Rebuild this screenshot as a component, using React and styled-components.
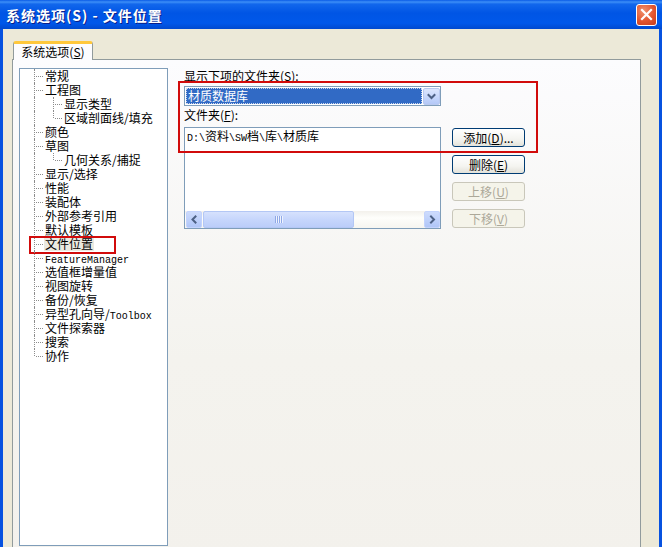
import React from 'react';
import styled, { createGlobalStyle } from 'styled-components';

const GlobalStyle = createGlobalStyle`
  html, body { margin: 0; padding: 0; background: #fff; }
  body {
    font-family: "Noto Sans CJK SC", "Liberation Sans", sans-serif;
    font-size: 12px;
    color: #000;
  }
  * { box-sizing: border-box; }
`;

const Window = styled.div`
  width: 662px;
  height: 547px;
  overflow: hidden;
  display: flex;
  flex-direction: column;
  background: #ece9d8;
`;

const TitleBar = styled.div`
  flex: 0 0 29px;
  display: flex;
  align-items: center;
  justify-content: space-between;
  padding: 0 5px 0 6px;
  background: linear-gradient(
    to bottom,
    #0a5be6 0%,
    #3d8ff7 7%,
    #1267ec 14%,
    #0055e5 45%,
    #0058ea 80%,
    #0049cf 100%
  );
`;

const Title = styled.div`
  color: #fff;
  font-weight: bold;
  font-size: 14px;
  line-height: 16px;
  letter-spacing: 1px;
  text-shadow: 1px 1px 0 #0a1f8a;
  white-space: pre;
`;

const CloseButton = styled.div`
  width: 21px;
  height: 22px;
  border: 1px solid #fff;
  border-radius: 3px;
  background: radial-gradient(circle at 35% 30%, #f0926e 0%, #e2552f 55%, #c53c1c 100%);
  display: flex;
  align-items: center;
  justify-content: center;
`;

const Frame = styled.div`
  flex: 1;
  display: flex;
  flex-direction: column;
  border-left: 3px solid #0752e0;
  border-right: 3px solid #0752e0;
  padding: 12px 18px 0 9px;
`;

const TabStrip = styled.div`
  display: flex;
  padding-left: 1px;
  position: relative;
  z-index: 1;
  margin-bottom: -1px;
`;

const Tab = styled.div`
  width: 80px;
  height: 19px;
  border: 1px solid #919b9c;
  border-top: 3px solid #ffc83c;
  border-bottom: none;
  border-radius: 3px 3px 0 0;
  background: #fcfcfe;
  display: flex;
  align-items: center;
  justify-content: center;
  line-height: 14px;
  padding-bottom: 1px;
`;

const Panel = styled.div`
  height: 500px;
  border: 1px solid #919b9c;
  background: linear-gradient(to bottom, #fcfcfe 0%, #f4f3ee 60%, #f3f1ec 100%);
  display: flex;
  align-items: flex-start;
  gap: 16px;
  padding: 8px 6px;
`;

/* ---------- tree ---------- */

const TreeBox = styled.div`
  flex: 0 0 149px;
  height: 478px;
  border: 1px solid #7f9db9;
  background: #fff;
  padding: 0 0 0 6px;
`;

const TreeRow = styled.div`
  position: relative;
  display: flex;
  height: 14px;
  line-height: 14px;
  white-space: nowrap;
`;

const Guide = styled.span`
  position: relative;
  flex: 0 0 19px;
  height: 100%;
  &::before {
    content: '';
    position: absolute;
    left: 8px;
    top: 0;
    height: 100%;
    border-left: 1px dotted #8c8c8c;
  }
`;

const Branch = styled.span`
  position: relative;
  flex: 0 0 19px;
  height: 100%;
  &::before {
    content: '';
    position: absolute;
    left: 8px;
    top: 0;
    height: ${(p) => (p.$last ? '7px' : '100%')};
    border-left: 1px dotted #8c8c8c;
  }
  &::after {
    content: '';
    position: absolute;
    left: 10px;
    top: 7px;
    width: 7px;
    border-top: 1px dotted #8c8c8c;
  }
`;

const NodeLabel = styled.span`
  display: block;
  height: 14px;
  padding: 0 1px;
  margin-left: -1px;
  background: ${(p) => (p.$selected ? '#ebe9e0' : 'transparent')};
`;

const Latin = styled.span`
  font-family: "Liberation Mono", "DejaVu Sans Mono", monospace;
  font-size: 10px;
  letter-spacing: 0;
`;

const Mark = styled.div`
  position: absolute;
  border: 2px solid #d10b0b;
  pointer-events: none;
  left: ${(p) => p.$left}px;
  top: ${(p) => p.$top}px;
  width: ${(p) => p.$width}px;
  height: ${(p) => p.$height}px;
`;

/* ---------- right side ---------- */

const Right = styled.div`
  position: relative;
  flex: 0 0 341px;
  padding-top: 1px;
`;

const FieldLabel = styled.div`
  height: 14px;
  line-height: 14px;
  margin-top: ${(p) => p.$mt || 0}px;
  white-space: nowrap;
`;

const Combo = styled.div`
  margin-top: 3px;
  width: 257px;
  height: 20px;
  border: 1px solid #7f9db9;
  background: #fff;
  display: flex;
  align-items: stretch;
  padding: 1px 0 0 1px;
`;

const ComboValue = styled.div`
  flex: 1;
  height: 16px;
  margin-right: 1px;
  background: #316ac5;
  color: #fff;
  line-height: 15px;
  padding-left: 2px;
  outline: 1px dotted #c9d6ee;
  outline-offset: -1px;
`;

const ComboButton = styled.div`
  flex: 0 0 17px;
  height: 17px;
  border: 1px solid #b9c9ef;
  border-radius: 2px;
  background: linear-gradient(to bottom, #dce6fd 0%, #c4d5fb 60%, #b5c8f7 100%);
  display: flex;
  align-items: center;
  justify-content: center;
`;

const ListRow = styled.div`
  margin-top: 5px;
  display: flex;
  gap: 11px;
  align-items: flex-start;
`;

const ListBox = styled.div`
  width: 257px;
  height: 102px;
  border: 1px solid #7f9db9;
  background: #fff;
  display: flex;
  flex-direction: column;
`;

const ListItems = styled.div`
  flex: 1;
  padding: 1px 2px;
  line-height: 14px;
  white-space: nowrap;
`;

const HScroll = styled.div`
  flex: 0 0 17px;
  display: flex;
  align-items: stretch;
  padding: 0 0 0 1px;
  background: linear-gradient(to bottom, #f3f1ec 0%, #fefefb 40%, #f6f5f0 100%);
`;

const ArrowButton = styled.div`
  flex: 0 0 16px;
  border: 1px solid #c3d3fd;
  border-radius: 2px;
  background: linear-gradient(to bottom, #cddbfc 0%, #bccffa 60%, #b0c6f7 100%);
  display: flex;
  align-items: center;
  justify-content: center;
`;

const Thumb = styled.div`
  flex: 0 0 151px;
  margin-left: 1px;
  border: 1px solid #b3c7f5;
  border-radius: 2px;
  background: linear-gradient(to bottom, #d6e1fd 0%, #c6d6fc 50%, #bbcdf9 100%);
  display: flex;
  align-items: center;
  justify-content: center;
  gap: 1px;
`;

const Grip = styled.span`
  width: 1px;
  height: 7px;
  background: #8fa8e6;
  box-shadow: 1px 0 0 #eef3fe;
`;

const Track = styled.div`
  flex: 1;
`;

const ButtonColumn = styled.div`
  margin-top: 1px;
  display: flex;
  flex-direction: column;
  gap: 8px;
`;

const XpButton = styled.div`
  width: 73px;
  height: 19px;
  border: 1px solid ${(p) => (p.$disabled ? '#c9c7ba' : '#003c74')};
  border-radius: 3px;
  background: ${(p) =>
    p.$disabled
      ? '#f5f4ea'
      : 'linear-gradient(to bottom, #ffffff 0%, #f4f4f0 60%, #e3e2da 100%)'};
  color: ${(p) => (p.$disabled ? '#aca899' : '#000')};
  display: flex;
  align-items: center;
  justify-content: center;
  line-height: 14px;
  white-space: nowrap;
`;

const Chevron = ({ dir }) => {
  const d = {
    down: 'M2.5 4 L5.5 7 L8.5 4',
    left: 'M6.5 2.5 L3.5 5.5 L6.5 8.5',
    right: 'M4 2.5 L7 5.5 L4 8.5',
  }[dir];
  return (
    <svg width="11" height="11" viewBox="0 0 11 11">
      <path d={d} fill="none" stroke="#4d6185" strokeWidth="2" strokeLinecap="square" />
    </svg>
  );
};

const tree = [
  { label: '常规', level: 0 },
  { label: '工程图', level: 0 },
  { label: '显示类型', level: 1 },
  { label: '区域剖面线/填充', level: 1, last: true },
  { label: '颜色', level: 0 },
  { label: '草图', level: 0 },
  { label: '几何关系/捕捉', level: 1, last: true },
  { label: '显示/选择', level: 0 },
  { label: '性能', level: 0 },
  { label: '装配体', level: 0 },
  { label: '外部参考引用', level: 0 },
  { label: '默认模板', level: 0 },
  { label: '文件位置', level: 0, selected: true },
  { label: <Latin>FeatureManager</Latin>, level: 0 },
  { label: '选值框增量值', level: 0 },
  { label: '视图旋转', level: 0 },
  { label: '备份/恢复', level: 0 },
  { label: <>异型孔向导/<Latin>Toolbox</Latin></>, level: 0 },
  { label: '文件探索器', level: 0 },
  { label: '搜索', level: 0 },
  { label: '协作', level: 0, last: true },
];

export default function App() {
  return (
    <>
      <GlobalStyle />
      <Window>
        <TitleBar>
          <Title>系统选项(S) - 文件位置</Title>
          <CloseButton>
            <svg width="13" height="13" viewBox="0 0 13 13">
              <path d="M2 2 L11 11 M11 2 L2 11" stroke="#fff" strokeWidth="2.2" strokeLinecap="square" />
            </svg>
          </CloseButton>
        </TitleBar>
        <Frame>
          <TabStrip>
            <Tab>
              系统选项(<u>S</u>)
            </Tab>
          </TabStrip>
          <Panel>
            <TreeBox>
              {tree.map((node, i) => (
                <TreeRow key={i}>
                  {node.level === 1 && <Guide />}
                  <Branch $last={node.last} />
                  <NodeLabel $selected={node.selected}>{node.label}</NodeLabel>
                  {node.selected && <Mark $left={3} $top={-1} $width={87} $height={18} />}
                </TreeRow>
              ))}
            </TreeBox>
            <Right>
              <FieldLabel>
                显示下项的文件夹(<u>S</u>):
              </FieldLabel>
              <Combo>
                <ComboValue>材质数据库</ComboValue>
                <ComboButton>
                  <Chevron dir="down" />
                </ComboButton>
              </Combo>
              <FieldLabel $mt={2}>
                文件夹(<u>F</u>):
              </FieldLabel>
              <ListRow>
                <ListBox>
                  <ListItems>
                    <Latin>D:\</Latin>资料<Latin>\SW</Latin>档<Latin>\</Latin>库<Latin>\</Latin>材质库
                  </ListItems>
                  <HScroll>
                    <ArrowButton>
                      <Chevron dir="left" />
                    </ArrowButton>
                    <Thumb>
                      <Grip />
                      <Grip />
                      <Grip />
                      <Grip />
                    </Thumb>
                    <Track />
                    <ArrowButton>
                      <Chevron dir="right" />
                    </ArrowButton>
                  </HScroll>
                </ListBox>
                <ButtonColumn>
                  <XpButton>
                    添加(<u>D</u>)...
                  </XpButton>
                  <XpButton>
                    删除(<u>E</u>)
                  </XpButton>
                  <XpButton $disabled>
                    上移(<u>U</u>)
                  </XpButton>
                  <XpButton $disabled>
                    下移(<u>V</u>)
                  </XpButton>
                </ButtonColumn>
              </ListRow>
              <Mark $left={-6} $top={13} $width={360} $height={72} />
            </Right>
          </Panel>
        </Frame>
      </Window>
    </>
  );
}
